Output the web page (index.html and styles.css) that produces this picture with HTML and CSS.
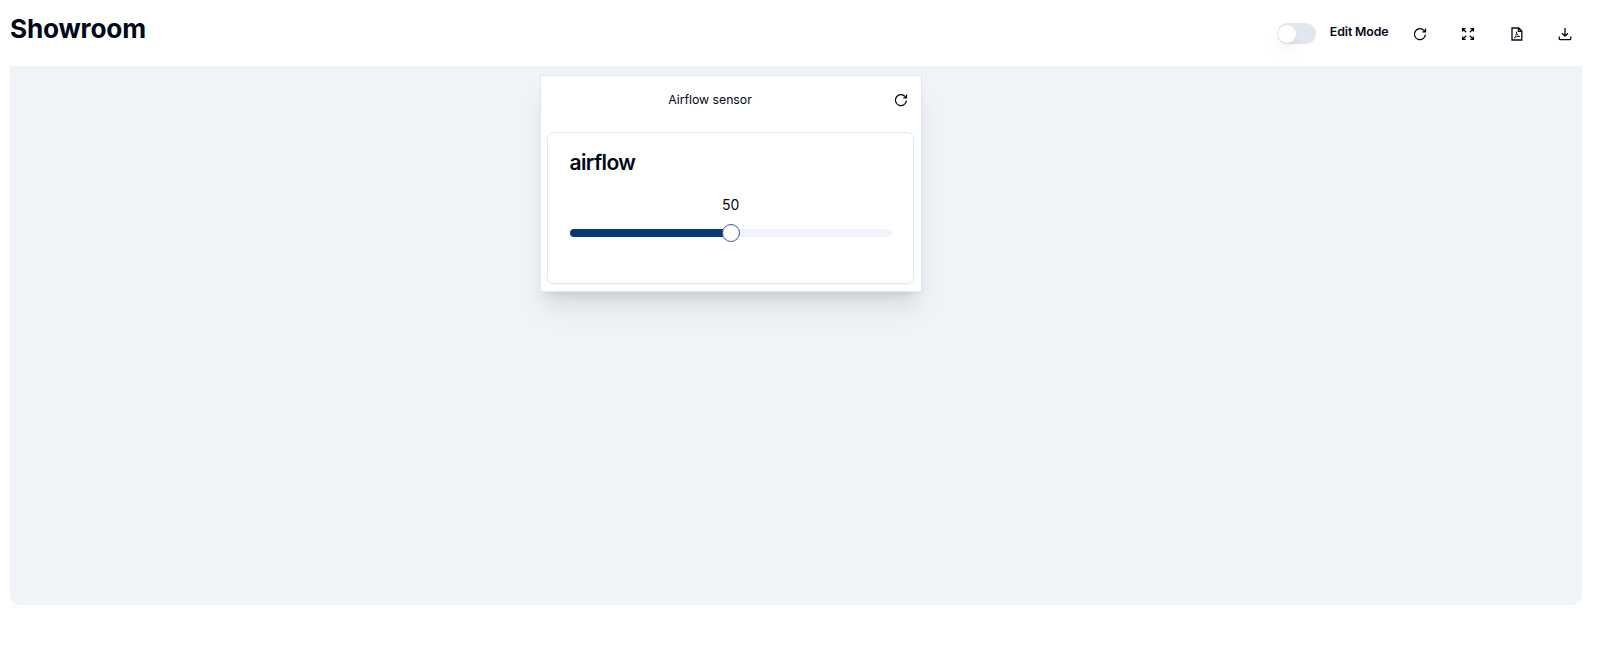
FILE: index.html
```html
<!DOCTYPE html>
<html lang="en">
<head>
<meta charset="utf-8">
<title>Showroom</title>
<link rel="stylesheet" href="styles.css">
</head>
<body>
<header class="topbar">
  <h1 class="title">Showroom</h1>
  <div class="actions">
    <button class="switch" role="switch" aria-checked="false" aria-label="Edit Mode"><span class="switch-thumb"></span></button>
    <span class="switch-label">Edit Mode</span>
    <button class="icon-button" aria-label="Refresh">
      <svg class="icon" viewBox="0 0 16 16"><path d="M13.4 8.6A5.5 5.5 0 1 1 12 4.4l1.4 1.3M13.5 2.4v3.4h-3.2"/></svg>
    </button>
    <button class="icon-button" aria-label="Full screen">
      <svg class="icon" viewBox="0 0 16 16"><path d="M2.6 5.6v-3h3M10.4 2.6h3v3M13.4 10.4v3h-3M5.6 13.4h-3v-3M2.6 2.6l3.6 3.6M13.4 2.6L9.8 6.2M13.4 13.4L9.8 9.8M2.6 13.4l3.6-3.6"/></svg>
    </button>
    <button class="icon-button" aria-label="Export PDF">
      <svg class="icon" viewBox="0 0 16 16"><path d="M3 2h6.8l3 3v9H3zM9.4 2v3.4h3.4"/><path class="fine" d="M7.5 5.8c.3 2.8 1.2 4.2 3.4 4.8-2.2-.5-4.2.1-5.8 1.5 1.6-1.4 2.5-3.2 2.4-6.3z"/></svg>
    </button>
    <button class="icon-button" aria-label="Download">
      <svg class="icon" viewBox="0 0 16 16"><path d="M8 2v8M5 7.2l3 3 3-3M2.2 10.4v2c0 .8.5 1.3 1.3 1.3h9c.8 0 1.3-.5 1.3-1.3v-2"/></svg>
    </button>
  </div>
</header>
<main class="board">
  <section class="widget">
    <div class="widget-header">
      <span class="widget-title">Airflow sensor</span>
      <button class="widget-refresh" aria-label="Refresh widget">
        <svg class="icon" viewBox="0 0 16 16"><path d="M13.4 8.6A5.5 5.5 0 1 1 12 4.4l1.4 1.3M13.5 2.4v3.4h-3.2"/></svg>
      </button>
    </div>
    <div class="card">
      <h2 class="card-title">airflow</h2>
      <div class="value">50</div>
      <div class="slider">
        <div class="range"></div>
        <div class="thumb"></div>
        <div class="rest"></div>
      </div>
    </div>
  </section>
</main>
</body>
</html>
```
FILE: styles.css
```css
* { box-sizing: border-box; }
body {
  margin: 0;
  padding: 0 16px 0 10px;
  background: #fff;
  color: #020817;
  font-family: Inter, sans-serif;
}
button { border: 0; padding: 0; background: none; color: inherit; }
.topbar { display: flex; justify-content: space-between; height: 66.4px; }
.title { margin: 12px 0 0; font-size: 26.2px; line-height: 34px; font-weight: 700; letter-spacing: -.2px; }
.actions { display: flex; align-items: center; height: 67px; }
.switch {
  display: flex;
  align-items: center;
  width: 38.5px;
  height: 21px;
  padding: 0 1px;
  border-radius: 11px;
  background: #e1e7ef;
}
.switch-thumb {
  width: 18px;
  height: 18px;
  border-radius: 50%;
  background: #fff;
  box-shadow: 0 10px 15px -3px rgba(0,0,0,.1), 0 4px 6px -4px rgba(0,0,0,.1);
}
.switch-label { margin: -3px 9px 0 14px; font-size: 12.3px; font-weight: 600; line-height: 16px; letter-spacing: -.1px; }
.icon-button { display: flex; align-items: center; justify-content: center; width: 44px; height: 36px; margin-right: 4.5px; }
.icon-button:last-child { margin-right: -5px; }
.icon { display: block; width: 16px; height: 16px; fill: none; stroke: currentColor; stroke-width: 1.3; }
.fine { stroke-width: .8; }
.board { display: flex; align-items: flex-start; height: 538.6px; padding: 8.6px 0 0 530px; background: #f0f4f9; border-radius: 0 0 10px 10px; }
.widget {
  width: 382px;
  height: 217px;
  padding: 0 7px 0 6px;
  border: 1px solid #e1e7ef;
  background: #fff;
  box-shadow: 0 20px 25px -5px rgba(0,0,0,.1), 0 8px 10px -6px rgba(0,0,0,.1);
}
.widget-header { display: grid; grid-template-columns: 1fr 24px; align-items: center; height: 48px; margin-bottom: 8px; padding-right: 1px; }
.widget-title { padding-right: 16px; text-align: center; font-size: 12.3px; line-height: 16px; letter-spacing: -.03px; }
.widget-refresh { display: flex; justify-content: center; }
.card { height: 152px; padding: 17px 21px 17px 21.5px; border: 1px solid #e1e7ef; border-radius: 7px; box-shadow: 0 1px 2px rgba(0,0,0,.05); }
.card-title { margin: 0; font-size: 21px; line-height: 26px; font-weight: 600; letter-spacing: -.6px; }
.value { margin-top: 19px; text-align: center; font-size: 14px; line-height: 20px; }
.slider { display: flex; align-items: center; height: 17px; margin-top: 10px; }
.range { flex: 1; height: 8px; border-radius: 4px 0 0 4px; background: #0b3877; margin-right: -1px; }
.rest { flex: 1; height: 8px; border-radius: 0 4px 4px 0; background: #f0f3f9; margin-left: -1px; }
.thumb { position: relative; width: 18px; height: 18px; flex: none; border: 1px solid #3c5c92; border-radius: 50%; background: #fff; }
```
